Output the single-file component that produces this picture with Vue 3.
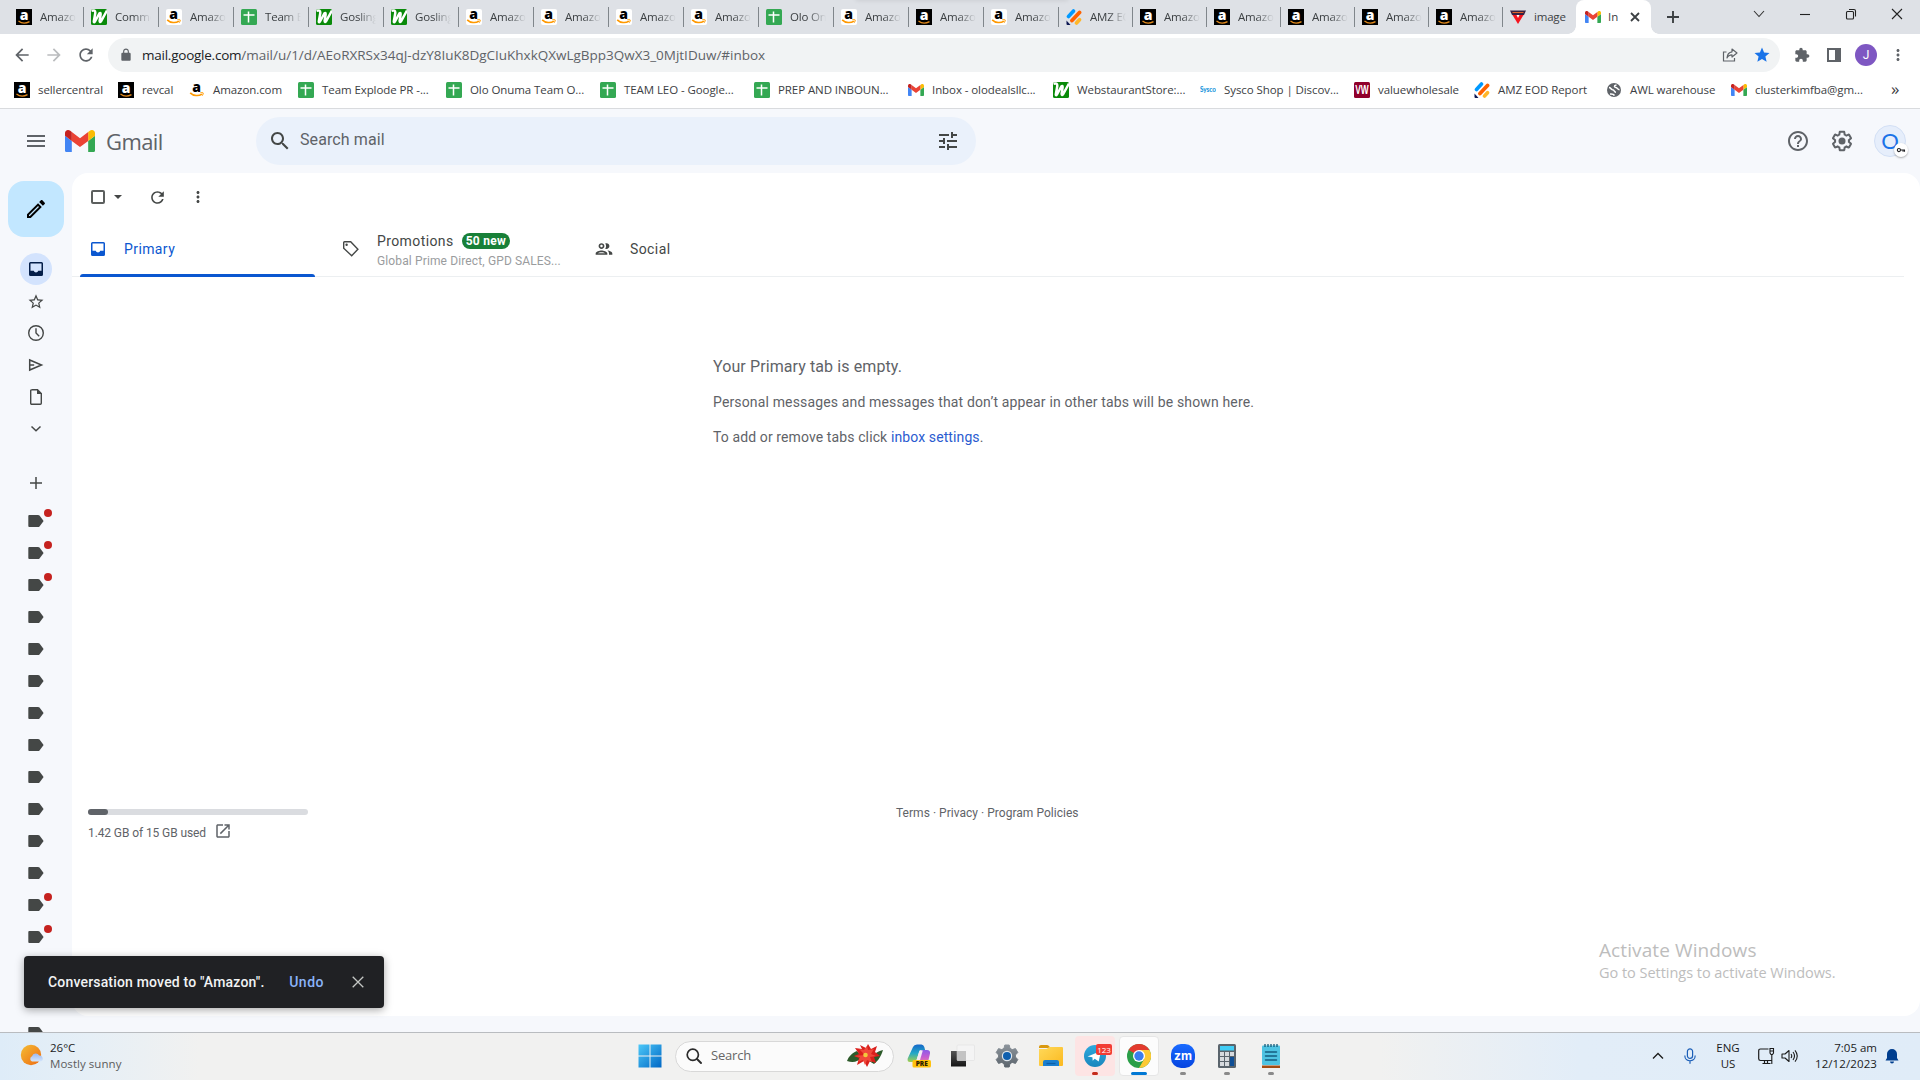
<script setup>
const tabs = [
  { icon: 'amz-dark', title: 'Amazon' },
  { icon: 'webst', title: 'Commer' },
  { icon: 'amz-light', title: 'Amazon' },
  { icon: 'sheet', title: 'Team Ex' },
  { icon: 'webst', title: 'Gosling' },
  { icon: 'webst', title: 'Gosling' },
  { icon: 'amz-light', title: 'Amazon' },
  { icon: 'amz-light', title: 'Amazon' },
  { icon: 'amz-light', title: 'Amazon' },
  { icon: 'amz-light', title: 'Amazon' },
  { icon: 'sheet', title: 'Olo Onu' },
  { icon: 'amz-light', title: 'Amazon' },
  { icon: 'amz-dark', title: 'Amazon' },
  { icon: 'amz-light', title: 'Amazon' },
  { icon: 'jot', title: 'AMZ EO', narrow: true },
  { icon: 'amz-dark', title: 'Amazon', narrow: true },
  { icon: 'amz-dark', title: 'Amazon', narrow: true },
  { icon: 'amz-dark', title: 'Amazon', narrow: true },
  { icon: 'amz-dark', title: 'Amazon', narrow: true },
  { icon: 'amz-dark', title: 'Amazon', narrow: true },
  { icon: 'shield', title: 'image', narrow: true, last: true },
]

// w: label width in px
const bookmarks = [
  { icon: 'amz-dark', label: 'sellercentral', w: 63 },
  { icon: 'amz-dark', label: 'revcal', w: 30 },
  { icon: 'amz-plain', label: 'Amazon.com', w: 68 },
  { icon: 'sheet', label: 'Team Explode PR -...', w: 107 },
  { icon: 'sheet', label: 'Olo Onuma Team O...', w: 113 },
  { icon: 'sheet', label: 'TEAM LEO - Google...', w: 113 },
  { icon: 'sheet', label: 'PREP AND INBOUN...', w: 113 },
  { icon: 'gmail', label: 'Inbox - olodealsllc...', w: 104 },
  { icon: 'webst', label: 'WebstaurantStore:...', w: 106 },
  { icon: 'sysco', label: 'Sysco Shop | Discov...', w: 113 },
  { icon: 'vw', label: 'valuewholesale', w: 79 },
  { icon: 'jot', label: 'AMZ EOD Report', w: 91 },
  { icon: 'globe', label: 'AWL warehouse', w: 84 },
  { icon: 'gmail', label: 'clusterkimfba@gm...', w: 110 },
]

const folders = ['star', 'clock', 'send', 'file', 'expand']
const unread = [0, 1, 2, 12, 13]
const labels = Array.from({ length: 17 }, (_, i) => ({ id: i, dot: unread.includes(i) }))

const apps = [
  { icon: 'settings-app' },
  { icon: 'folder' },
  { icon: 'telegram', state: 'alert' },
  { icon: 'chrome', state: 'active' },
  { icon: 'zoom', state: 'open' },
  { icon: 'calc', state: 'open' },
  { icon: 'notepad', state: 'open' },
]
</script>

<template>
  <svg class="defs" width="0" height="0">
    <defs>
      <linearGradient id="g-win" x1="0" y1="0" x2="1" y2="1">
        <stop offset="0" stop-color="#4cc8f8" /><stop offset="1" stop-color="#0067c5" />
      </linearGradient>
      <linearGradient id="g-sun" x1="0" y1="0" x2="1" y2="1">
        <stop offset="0" stop-color="#f4bd35" /><stop offset="1" stop-color="#ee6a10" />
      </linearGradient>
      <linearGradient id="g-cloud" x1="0" y1="0" x2="0" y2="1">
        <stop offset="0" stop-color="#9db9ef" /><stop offset="1" stop-color="#d4e6fb" />
      </linearGradient>
      <linearGradient id="g-tg" x1="0" y1="0" x2="0" y2="1">
        <stop offset="0" stop-color="#2fa9dd" /><stop offset="1" stop-color="#1b86bd" />
      </linearGradient>
      <linearGradient id="g-fold" x1="0" y1="0" x2="1" y2="1">
        <stop offset="0" stop-color="#ffd95a" /><stop offset="1" stop-color="#fbb91f" />
      </linearGradient>
      <linearGradient id="g-cpa" x1="0" y1="0" x2="0" y2="1">
        <stop offset="0" stop-color="#1668c9" /><stop offset=".5" stop-color="#22a8c8" /><stop offset="1" stop-color="#a5cf4a" />
      </linearGradient>
      <linearGradient id="g-cpb" x1="0" y1="0" x2="0" y2="1">
        <stop offset="0" stop-color="#8b5be8" /><stop offset=".5" stop-color="#c65bd0" /><stop offset="1" stop-color="#f0849a" />
      </linearGradient>
      <linearGradient id="g-zm" x1="0" y1="0" x2="0" y2="1">
        <stop offset="0" stop-color="#1a6bff" /><stop offset="1" stop-color="#0544e0" />
      </linearGradient>
      <linearGradient id="g-gear" x1="0" y1="0" x2="0" y2="1">
        <stop offset="0" stop-color="#8c949b" /><stop offset="1" stop-color="#5c656d" />
      </linearGradient>
      <linearGradient id="g-tv" x1="0" y1="0" x2="0" y2="1">
        <stop offset="0" stop-color="#555" /><stop offset="1" stop-color="#151515" />
      </linearGradient>
    </defs>

    <!-- favicons, 16px grid -->
    <symbol id="amz-dark" viewBox="0 0 16 16">
      <rect width="16" height="16" fill="#000" />
      <text x="8" y="11" text-anchor="middle" font-family="Open Sans" font-weight="800" font-size="14" fill="#fff">a</text>
      <path d="M2.500 12c3 2.400 7.500 2.500 11 .6" fill="none" stroke="#e28a1c" stroke-width="1.300" />
    </symbol>
    <symbol id="amz-light" viewBox="0 0 16 16">
      <rect width="16" height="16" rx="2" fill="#fff" />
      <text x="7.600" y="10" text-anchor="middle" font-family="Open Sans" font-weight="800" font-size="14" fill="#000">a</text>
      <path d="M1.200 10.800c3.300 3.200 8.300 3.500 11.800 1.300" fill="none" stroke="#f90" stroke-width="1.700" />
      <path d="M11.300 10.800c1.600-.5 3-.3 2.900.2 0 .8-.3 1.800-.9 2.700" fill="none" stroke="#f90" stroke-width="1" />
    </symbol>
    <symbol id="amz-plain" viewBox="0 0 16 16">
      <text x="7.600" y="10" text-anchor="middle" font-family="Open Sans" font-weight="800" font-size="14" fill="#000">a</text>
      <path d="M1.200 10.800c3.300 3.200 8.300 3.500 11.800 1.300" fill="none" stroke="#f90" stroke-width="1.700" />
      <path d="M11.300 10.800c1.600-.5 3-.3 2.900.2 0 .8-.3 1.800-.9 2.700" fill="none" stroke="#f90" stroke-width="1" />
    </symbol>
    <symbol id="sheet" viewBox="0 0 16 16">
      <rect width="16" height="16" rx="1.500" fill="#34a853" />
      <path d="M2.500 6h11M7.500 2.500v11" stroke="#fff" stroke-width="1.500" />
    </symbol>
    <symbol id="webst" viewBox="0 0 16 16">
      <rect width="16" height="16" rx="1.500" fill="#0a8a0a" />
      <path d="M.5 1.800Q4.500.5 4.300 4L2.800 12.500Q2.800 14 4 12.500L8.300 4.500Q9.800 3 9.600 5.500L8.600 12Q8.800 14 10 12.300L16 1.500" fill="none" stroke="#fff" stroke-width="2.500" stroke-linejoin="round" />
    </symbol>
    <symbol id="jot" viewBox="0 0 16 16">
      <path d="M2.500 7.500l5-5.500" stroke="#0099ff" stroke-width="3.600" stroke-linecap="round" />
      <path d="M6 11.500L13.500 3.500" stroke="#ff6100" stroke-width="3.800" stroke-linecap="round" />
      <path d="M10.500 14l3-3.300" stroke="#ffb629" stroke-width="3.600" stroke-linecap="round" />
      <path d="M.5 11.500l4 4.500H1.500q-1 0-1-1z" fill="#0a1551" />
    </symbol>
    <symbol id="shield" viewBox="0 0 16 16">
      <path d="M0 1.500h16L14 6H2z" fill="#3a2140" />
      <path d="M2.500 3.500h11" stroke="#e0662c" stroke-width="1" />
      <path d="M2.500 6h11L8 15z" fill="#f5141e" />
      <path d="M6.500 6h3L8 9z" fill="#fff" />
    </symbol>
    <symbol id="gmail" viewBox="52 42 88 66">
      <path fill="#4285f4" d="M58 108h14V74L52 59v43c0 3.320 2.690 6 6 6" />
      <path fill="#34a853" d="M120 108h14c3.320 0 6-2.690 6-6V59l-20 15" />
      <path fill="#fbbc04" d="M120 48v26l20-15v-8c0-7.420-8.470-11.650-14.400-7.200" />
      <path fill="#ea4335" d="M72 74V48l24 18 24-18v26L96 92" />
      <path fill="#c5221f" d="M52 51v8l20 15V48l-5.600-4.200c-5.940-4.450-14.400-.22-14.400 7.200" />
    </symbol>
    <symbol id="sysco" viewBox="0 0 16 16">
      <text x="0" y="10.300" font-family="Lato" font-weight="900" font-size="6.500" textLength="16" lengthAdjust="spacingAndGlyphs" fill="#1a96dc">Sysco</text>
    </symbol>
    <symbol id="vw" viewBox="0 0 16 16">
      <rect width="16" height="16" rx="1.500" fill="#90002b" />
      <text x="8" y="12.300" text-anchor="middle" font-family="Liberation Sans" font-weight="700" font-size="12" textLength="13.500" lengthAdjust="spacingAndGlyphs" fill="#fff">VW</text>
    </symbol>
    <symbol id="globe" viewBox="0 0 16 16">
      <circle cx="8" cy="8" r="7" fill="#5f6368" />
      <path d="M3 5.500c2 0 1.500 2 3.500 2.200 2.500 0 1 2.500 3.500 2.500M10.500 3c-3 .5-2.500 2.500 0 2.700 1.200.3 1 2 3 2M4 12c2 .2 3.500 0 4.500 1.500" fill="none" stroke="#fff" stroke-width="1.500" />
    </symbol>

    <!-- browser glyphs -->
    <symbol id="back" viewBox="0 0 24 24"><path d="M20 11H7.830l5.590-5.590L12 4l-8 8 8 8 1.410-1.410L7.830 13H20v-2z" /></symbol>
    <symbol id="refresh" viewBox="0 0 24 24"><path d="M17.650 6.350C16.200 4.900 14.210 4 12 4c-4.420 0-7.990 3.580-7.990 8s3.570 8 7.990 8c3.730 0 6.840-2.550 7.730-6h-2.080c-.82 2.330-3.040 4-5.650 4-3.310 0-6-2.690-6-6s2.690-6 6-6c1.660 0 3.140.69 4.220 1.780L13 11h7V4l-2.350 2.350z" /></symbol>
    <symbol id="lock" viewBox="0 0 24 24"><path d="M18 8h-1V6c0-2.760-2.240-5-5-5S7 3.240 7 6v2H6c-1.100 0-2 .9-2 2v10c0 1.100.9 2 2 2h12c1.100 0 2-.9 2-2V10c0-1.100-.9-2-2-2zM9 6c0-1.660 1.340-3 3-3s3 1.340 3 3v2H9V6z" /></symbol>
    <symbol id="share" viewBox="0 0 16 16">
      <path d="M4.500 5H1.500v9h11v-3" fill="none" stroke="currentColor" stroke-width="1.200" />
      <path d="M10 2l5 4-5 4V7.800C7.500 7.800 6 8.800 5 11c.2-3.500 2-5.800 5-6.200z" fill="none" stroke="currentColor" stroke-width="1.200" stroke-linejoin="round" />
    </symbol>
    <symbol id="star-fill" viewBox="0 0 24 24"><path d="M12 17.270L18.180 21l-1.640-7.030L22 9.240l-7.190-.61L12 2 9.190 8.630 2 9.240l5.460 4.730L5.820 21z" /></symbol>
    <symbol id="puzzle" viewBox="0 0 24 24"><path d="M20.500 11H19V7c0-1.100-.9-2-2-2h-4V3.500C13 2.120 11.880 1 10.500 1S8 2.120 8 3.500V5H4c-1.100 0-1.990.9-1.990 2v3.800H3.500c1.490 0 2.700 1.210 2.700 2.700s-1.210 2.700-2.700 2.700H2V20c0 1.100.9 2 2 2h3.800v-1.500c0-1.490 1.210-2.700 2.700-2.700 1.490 0 2.700 1.210 2.700 2.700V22H17c1.100 0 2-.9 2-2v-4h1.500c1.380 0 2.500-1.120 2.500-2.500S21.880 11 20.500 11z" /></symbol>
    <symbol id="panel" viewBox="0 0 16 16"><path d="M1 1h14v14H1zM3 3v10h6V3z" fill-rule="evenodd" /></symbol>
    <symbol id="dots" viewBox="0 0 24 24"><path d="M12 8c1.100 0 2-.9 2-2s-.9-2-2-2-2 .9-2 2 .9 2 2 2zm0 2c-1.100 0-2 .9-2 2s.9 2 2 2 2-.9 2-2-.9-2-2-2zm0 6c-1.100 0-2 .9-2 2s.9 2 2 2 2-.9 2-2-.9-2-2-2z" /></symbol>

    <!-- mail glyphs -->
    <symbol id="menu" viewBox="0 0 24 24"><path d="M3 18h18v-2H3v2zm0-5h18v-2H3v2zm0-7v2h18V6H3z" /></symbol>
    <symbol id="search" viewBox="0 0 24 24"><path d="M15.500 14h-.79l-.28-.27C15.410 12.590 16 11.110 16 9.500 16 5.910 13.090 3 9.500 3S3 5.910 3 9.500 5.910 16 9.500 16c1.610 0 3.090-.59 4.230-1.570l.27.28v.79l5 4.990L20.490 19l-4.990-5zm-6 0C7.010 14 5 11.990 5 9.500S7.010 5 9.500 5 14 7.010 14 9.500 11.990 14 9.500 14z" /></symbol>
    <symbol id="tune" viewBox="0 0 24 24"><path d="M3 17v2h6v-2H3zM3 5v2h10V5H3zm10 16v-2h8v-2h-8v-2h-2v6h2zM7 9v2H3v2h4v2h2V9H7zm14 4v-2H11v2h10zm-6-4h2V7h4V5h-4V3h-2v6z" /></symbol>
    <symbol id="help" viewBox="0 0 24 24"><path d="M11 18h2v-2h-2v2zm1-16C6.480 2 2 6.480 2 12s4.480 10 10 10 10-4.480 10-10S17.520 2 12 2zm0 18c-4.410 0-8-3.590-8-8s3.590-8 8-8 8 3.590 8 8-3.590 8-8 8zm0-14c-2.210 0-4 1.790-4 4h2c0-1.100.9-2 2-2s2 .9 2 2c0 2-3 1.750-3 5h2c0-2.250 3-2.500 3-5 0-2.210-1.790-4-4-4z" /></symbol>
    <symbol id="gear" viewBox="0 0 24 24">
      <path d="M13.850 22.250h-3.700c-.74 0-1.360-.54-1.450-1.270l-.27-1.890c-.27-.14-.53-.29-.79-.46l-1.800.72c-.7.26-1.470-.03-1.810-.65L2.200 15.530c-.35-.66-.2-1.440.36-1.880l1.530-1.190c-.01-.15-.02-.3-.02-.46 0-.15.01-.31.02-.46l-1.520-1.190c-.59-.45-.74-1.260-.37-1.880l1.850-3.190c.34-.62 1.110-.9 1.790-.63l1.810.73c.26-.17.52-.32.78-.46l.27-1.910c.09-.7.71-1.250 1.440-1.250h3.700c.74 0 1.360.54 1.450 1.270l.27 1.890c.27.14.53.29.79.46l1.800-.72c.71-.26 1.480.03 1.820.65l1.840 3.180c.36.66.2 1.440-.36 1.880l-1.520 1.190c.01.15.02.3.02.46s-.01.31-.02.46l1.520 1.190c.56.45.72 1.230.37 1.860l-1.860 3.220c-.34.62-1.110.9-1.800.63l-1.800-.72c-.26.17-.52.32-.78.46l-.27 1.910c-.1.68-.72 1.220-1.460 1.220zm-3.230-2h2.760l.37-2.550.53-.22c.44-.18.88-.44 1.340-.78l.45-.34 2.380.96 1.380-2.400-2.030-1.580.07-.56c.03-.26.06-.51.06-.78s-.03-.53-.06-.78l-.07-.56 2.030-1.580-1.390-2.400-2.390.96-.45-.35c-.42-.32-.87-.58-1.330-.77l-.52-.22-.37-2.550h-2.760l-.37 2.550-.53.21c-.44.19-.88.44-1.340.79l-.45.33-2.380-.95-1.390 2.390 2.030 1.580-.07.56a7 7 0 0 0-.06.79c0 .26.02.53.06.78l.07.56-2.030 1.580 1.380 2.400 2.390-.96.45.35c.43.33.86.58 1.330.77l.53.22.38 2.550z" />
      <circle cx="12" cy="12" r="3.500" />
    </symbol>
    <symbol id="key" viewBox="0 0 12 12">
      <circle cx="3.500" cy="6" r="1.900" fill="none" stroke="currentColor" stroke-width="1.300" />
      <path d="M5.300 6h5.500M8.500 6v2M10.200 6v2" stroke="currentColor" stroke-width="1.300" />
    </symbol>
    <symbol id="pencil" viewBox="0 0 24 24"><path d="M14.060 9.020l.92.92L5.920 19H5v-.92l9.060-9.060M17.660 3c-.25 0-.51.1-.7.29l-1.830 1.830 3.750 3.750 1.830-1.830c.39-.39.39-1.020 0-1.410l-2.340-2.340c-.2-.2-.45-.29-.71-.29zm-3.600 3.190L3 17.250V21h3.750L17.810 9.940l-3.750-3.750z" /></symbol>
    <symbol id="inbox" viewBox="0 0 20 20"><path d="M4.500 3h11A1.500 1.500 0 0 1 17 4.500v11a1.500 1.500 0 0 1-1.500 1.500h-11A1.500 1.500 0 0 1 3 15.500v-11A1.500 1.500 0 0 1 4.500 3zM4.500 4.500v7.300h3.300c.3 1.100 1.200 1.700 2.200 1.700s1.900-.6 2.200-1.700h3.300V4.500z" fill-rule="evenodd" /></symbol>
    <symbol id="star" viewBox="0 0 24 24"><path d="M22 9.240l-7.190-.62L12 2 9.190 8.630 2 9.240l5.460 4.730L5.820 21 12 17.270 18.180 21l-1.630-7.030L22 9.240zM12 15.400l-3.760 2.270 1-4.280-3.320-2.880 4.380-.38L12 6.100l1.710 4.040 4.380.38-3.320 2.880 1 4.280L12 15.400z" transform="translate(1.200 2.200) scale(.9)" /></symbol>
    <symbol id="clock" viewBox="0 0 20 20"><path d="M10 5.300V10l3.200 3.200" fill="none" stroke="currentColor" stroke-width="1.400" /><circle cx="10" cy="10" r="7.300" fill="none" stroke="currentColor" stroke-width="1.400" /></symbol>
    <symbol id="send" viewBox="0 0 20 20"><path d="M3.700 5v10L15.500 10zM3.700 10h4.500" fill="none" stroke="currentColor" stroke-width="1.500" /></symbol>
    <symbol id="file" viewBox="0 0 20 20"><path d="M5.500 2.700h6l3.800 3.800v9.800a1 1 0 0 1-1 1H5.700a1 1 0 0 1-1-1V3.700a1 1 0 0 1 1-1z" fill="none" stroke="currentColor" stroke-width="1.400" /><path d="M11 2v5h5z" /></symbol>
    <symbol id="expand" viewBox="0 0 20 20"><path d="M5.500 7.500l4.500 4.300 4.500-4.300" fill="none" stroke="currentColor" stroke-width="1.500" /></symbol>
    <symbol id="plus" viewBox="0 0 20 20"><path d="M10 4v12M4 10h12" fill="none" stroke="currentColor" stroke-width="1.500" /></symbol>
    <symbol id="label" viewBox="0 0 20 20"><path d="M3.300 4h8.700q1 0 1.500.6L17.600 10l-4.100 5.400q-.5.6-1.500.6H3.300Q2.300 16 2.300 15V5q0-1 1-1z" /></symbol>
    <symbol id="tag" viewBox="0 0 20 20">
      <path d="M3.500 2.700h6.200l7.200 7.500-6.200 6.500-8-7.500V3.500q0-.8.8-.8z" fill="none" stroke="currentColor" stroke-width="1.400" />
      <circle cx="5.600" cy="5.700" r="1.200" />
    </symbol>
    <symbol id="people" viewBox="0 0 24 24"><path d="M9 13.750c-2.340 0-7 1.170-7 3.500V19h14v-1.750c0-2.330-4.660-3.500-7-3.500zM4.340 17c.84-.58 2.870-1.250 4.660-1.250s3.820.67 4.660 1.250H4.340zM9 12c1.930 0 3.500-1.570 3.500-3.500S10.930 5 9 5 5.500 6.570 5.500 8.500 7.070 12 9 12zm0-5c.83 0 1.500.67 1.500 1.500S9.830 10 9 10s-1.500-.67-1.500-1.500S8.170 7 9 7zm7.040 6.810c1.160.84 1.960 1.960 1.960 3.440V19h4v-1.750c0-2.020-3.500-3.170-5.960-3.440zM15 12c1.930 0 3.500-1.570 3.500-3.500S16.930 5 15 5c-.54 0-1.040.13-1.500.35.63.89 1 1.980 1 3.150s-.37 2.260-1 3.150c.46.22.96.35 1.500.35z" /></symbol>
    <symbol id="launch" viewBox="0 0 24 24"><path d="M19 19H5V5h7V3H5c-1.110 0-2 .9-2 2v14c0 1.100.89 2 2 2h14c1.100 0 2-.9 2-2v-7h-2v7zM14 3v2h3.590l-9.830 9.830 1.410 1.410L19 6.410V10h2V3h-7z" /></symbol>
    <symbol id="close" viewBox="0 0 12 12"><path d="M.7.7l10.600 10.600M11.300.7L.7 11.300" fill="none" stroke="currentColor" stroke-width="1.300" /></symbol>

    <!-- taskbar apps, 24px grid -->
    <symbol id="weather" viewBox="0 0 24 24">
      <circle cx="11" cy="11" r="10.200" fill="url(#g-sun)" />
      <path d="M12 17.500a2.800 2.800 0 0 1 0-5.200 4 4 0 0 1 7.200-.8 3 3 0 0 1 1 6z" fill="url(#g-cloud)" />
    </symbol>
    <symbol id="win" viewBox="0 0 24 24"><path d="M.5.5h11v11H.5zM12.500.5h11v11h-11zM.5 12.500h11v11H.5zM12.500 12.500h11v11h-11z" fill="url(#g-win)" /></symbol>
    <symbol id="flower" viewBox="0 0 36 24">
      <path d="M0 17c2-5 5-8 10-10l5 6c-4 5-9 6-15 4zM36 6c-2 6-4 10-9 14l-5-3c2-5 7-9 14-11z" fill="#2c5a2a" />
      <path d="M18 11L13 1l6 3 2-4 3 5 6-3-2 6 5 4-6 1 2 6-6-2-3 6-3-6-7 4 2-7-5-2 5-2-4-6 7 1z" fill="#d91f1c" />
      <path d="M18 11l-6-6 5 1 3-4 1 4 6-1-3 5 5 2-6 1 2 5-5-2-2 5-2-5-5 2 2-5-6-1z" fill="#f0483a" />
      <circle cx="18.500" cy="11" r="2.300" fill="#f3c93c" />
    </symbol>
    <symbol id="copilot" viewBox="0 0 24 24">
      <path d="M6 3q1-2.500 4-2.500h4.500q2 0 2.800 2.500l.8 3h-3.500q-2 0-2.600 2l-2 7q-1 3-4 3H3Q0 18 .7 14.500z" fill="url(#g-cpa)" />
      <path d="M14.500 6H20q3.500 0 3 3.500L21.500 16q-.8 4-4.500 4H8.500q2 0 3-3.500z" fill="url(#g-cpb)" />
      <path d="M12.600 6.500h3.200L13 16H9.500z" fill="#f5e9f5" />
      <rect x="5.500" y="16" width="18.500" height="7.500" rx="1.500" fill="#ffc20e" />
      <text x="14.700" y="22" text-anchor="middle" font-family="Open Sans" font-weight="800" font-size="6.500" fill="#2a2000">PRE</text>
    </symbol>
    <symbol id="taskview" viewBox="0 0 24 24">
      <rect x="0" y="7" width="15" height="15.500" fill="url(#g-tv)" />
      <rect x="6" y="1" width="17.500" height="15.500" rx="1" fill="#f4f4f4" stroke="#dcdcdc" stroke-width=".5" />
      <rect x="6" y="7" width="9" height="9.500" fill="#c3c3c3" />
    </symbol>
    <symbol id="settings-app" viewBox="0 0 24 24">
      <path d="M9.800 1h4.400l.8 3.300 2.200 1.300 3.300-1L22.800 8.500 20.400 11v2l2.400 2.500-2.300 3.900-3.300-1-2.200 1.300-.8 3.300H9.800L9 19.700l-2.200-1.300-3.300 1-2.300-3.900L3.600 13v-2L1.200 8.500l2.300-3.900 3.300 1L9 4.300z" fill="url(#g-gear)" stroke="url(#g-gear)" stroke-linejoin="round" />
      <circle cx="12" cy="12" r="5.200" fill="#dfe6ec" />
      <circle cx="12" cy="12" r="4" fill="#0f5fae" />
    </symbol>
    <symbol id="folder" viewBox="0 0 24 24">
      <path d="M0 3Q0 1 2 1h6q1 0 2 1l1.500 2H0z" fill="#d9980f" />
      <path d="M0 5h7q1 0 2-1l1-1h13q1 0 1 1v17q0 1-1 1H1q-1 0-1-1z" fill="url(#g-fold)" />
      <path d="M4 22v-4q0-2 2-2h12q2 0 2 2v4z" fill="#1b7fce" />
      <path d="M7.500 19.500h9" stroke="#0d5fa8" stroke-width="1.300" />
    </symbol>
    <symbol id="telegram" viewBox="0 0 24 24">
      <circle cx="12" cy="12" r="11" fill="url(#g-tg)" />
      <path d="M4.500 12.500L18 7l-2.300 10.500-4-2.800-2 2-.3-3.500z" fill="#fff" />
    </symbol>
    <symbol id="chrome" viewBox="0 0 24 24">
      <circle cx="12" cy="12" r="12" fill="#2a9f48" />
      <path d="M12 12L1.600 6A12 12 0 0 1 22.400 6z" fill="#e33b2e" />
      <path d="M22.400 6A12 12 0 0 1 12 24l5.200-9L12 6z" fill="#fcc934" />
      <circle cx="12" cy="12" r="6" fill="#fff" />
      <circle cx="12" cy="12" r="4.700" fill="#3b7ded" />
    </symbol>
    <symbol id="zoom" viewBox="0 0 24 24">
      <rect width="24" height="24" rx="10" fill="url(#g-zm)" />
      <text x="12" y="16" text-anchor="middle" font-family="Inter" font-weight="700" font-size="12" textLength="18" lengthAdjust="spacingAndGlyphs" fill="#fff">zm</text>
    </symbol>
    <symbol id="calc" viewBox="0 0 24 24">
      <rect x="3" width="18" height="24" rx="1.500" fill="#5a646c" />
      <rect x="5" y="2" width="14" height="4.500" fill="#41cdf5" />
      <path d="M5 8h4v4H5zM10 8h4v4h-4zM15 8h4v4h-4zM5 13h4v4H5zM10 13h4v4h-4zM5 18h4v4H5zM10 18h4v4h-4z" fill="#d6dade" />
      <path d="M15 13h4v9h-4z" fill="#0f4f96" />
    </symbol>
    <symbol id="notepad" viewBox="0 0 24 24">
      <path d="M3 20h18v4H3z" fill="#a34d14" /><path d="M3 20h18v1.500H3z" fill="#e8e8e8" />
      <rect x="3" y="1.500" width="18" height="19.500" rx="1" fill="#4ec3e2" />
      <path d="M6 0v3M9 0v3M12 0v3M15 0v3M18 0v3" stroke="#145a78" stroke-width="1.300" />
      <path d="M6.500 8h11M6.500 12h11M6.500 16h11" stroke="#155d80" stroke-width="1.500" stroke-linecap="round" />
    </symbol>
    <symbol id="mic" viewBox="0 0 16 16"><path d="M8 .8a2.600 2.600 0 0 1 2.600 2.600v4.400a2.600 2.600 0 0 1-5.200 0V3.400A2.600 2.600 0 0 1 8 .8zM2.800 7.500c0 7 10.400 7 10.400 0M8 12.800v3" fill="none" stroke="#1c5fb8" stroke-width="1.200" /></symbol>
    <symbol id="monitor" viewBox="0 0 18 18"><path d="M11.500 2H3.500Q1.700 2 1.700 3.800v8Q1.700 13.500 3.500 13.500H15M5.500 16.500h8M7.500 13.500v3M10.500 13.500v3" fill="none" stroke="currentColor" stroke-width="1.200" /><path d="M13 1.500h3.500V6L15.500 7.500h-1.500L13 6zM13 4h3.500M14.800 7.500V17" fill="none" stroke="currentColor" stroke-width="1.100" /></symbol>
    <symbol id="speaker" viewBox="0 0 18 16"><path d="M1 6h3l4-3.500v11L4 10H1zM10 6q1.500 2 0 4M12 4q3 4 0 8M14 2.300q4.500 5.700 0 11.400" fill="none" stroke="currentColor" stroke-width="1.100" stroke-linejoin="round" /></symbol>
    <symbol id="bell" viewBox="0 0 16 16"><path d="M8 1a5 5 0 0 1 5 5v4l1.500 2.500H1.500L3 10V6a5 5 0 0 1 5-5zM6 13.500h4a2 2 0 0 1-4 0z" fill="#003e8f" /></symbol>
  </svg>

  <div class="screen">
    <div class="tabstrip">
      <div v-for="(t, i) in tabs" :key="i" class="tab" :class="{ narrow: t.narrow, last: t.last }">
        <svg class="fav"><use :href="`#${t.icon}`" /></svg>
        <span class="tab-title">{{ t.title }}</span>
      </div>
      <div class="tab-active">
        <svg class="fav"><use href="#gmail" /></svg>
        <span>In</span>
        <svg class="tab-x" viewBox="0 0 12 12"><path d="M2 2l8 8M10 2l-8 8" stroke="#3c4043" stroke-width="1.800" /></svg>
      </div>
      <svg class="newtab" viewBox="0 0 14 14"><path d="M7 1v12M1 7h12" stroke="#3c4043" stroke-width="1.900" /></svg>
      <div class="winbtns">
        <svg viewBox="0 0 12 12"><path d="M1 3l5 5.500L11 3" fill="none" stroke="#333" stroke-width="1.100" /></svg>
        <svg viewBox="0 0 12 12"><path d="M1 6.500h10" stroke="#222" stroke-width="1.100" /></svg>
        <svg viewBox="0 0 12 12"><path d="M1.500 4.500q0-1 1-1H7.500q1 0 1 1v5.500q0 1-1 1H2.500q-1 0-1-1zM4 1.500H9q1.500 0 1.500 1.500V8.500" fill="none" stroke="#222" stroke-width="1.100" /></svg>
        <svg viewBox="0 0 12 12"><path d="M1 1l10 10M11 1L1 11" stroke="#222" stroke-width="1.100" /></svg>
      </div>
      <div class="drop-shade" />
    </div>

    <div class="navbar">
      <svg class="nav-ic"><use href="#back" /></svg>
      <svg class="nav-ic fwd"><use href="#back" /></svg>
      <svg class="nav-ic"><use href="#refresh" /></svg>
      <div class="omnibox">
        <svg class="lock"><use href="#lock" /></svg>
        <span class="url"><b>mail.google.com</b>/mail/u/1/d/AEoRXRSx34qJ-dzY8IuK8DgCIuKhxkQXwLgBpp3QwX3_0MjtIDuw/#inbox</span>
        <svg class="share"><use href="#share" /></svg>
        <svg class="bm-star"><use href="#star-fill" /></svg>
      </div>
      <svg class="ext"><use href="#puzzle" /></svg>
      <svg class="side"><use href="#panel" /></svg>
      <div class="profile">J</div>
      <svg class="more"><use href="#dots" /></svg>
    </div>

    <div class="bookmarks">
      <div v-for="b in bookmarks" :key="b.label" class="bm">
        <svg class="fav"><use :href="`#${b.icon}`" /></svg>
        <span :style="{ width: b.w + 'px' }">{{ b.label }}</span>
      </div>
      <div class="bm-more">»</div>
    </div>

    <div class="mail">
      <header class="topbar">
        <svg class="burger"><use href="#menu" /></svg>
        <svg class="glogo"><use href="#gmail" /></svg>
        <span class="brand">Gmail</span>
        <div class="searchbox">
          <svg class="i24"><use href="#search" /></svg>
          <span>Search mail</span>
          <svg class="i24"><use href="#tune" /></svg>
        </div>
        <div class="topbar-right">
          <svg class="i24"><use href="#help" /></svg>
          <svg class="i24"><use href="#gear" /></svg>
          <div class="account">
            O
            <div class="badge-key"><svg><use href="#key" /></svg></div>
          </div>
        </div>
      </header>

      <div class="body">
        <nav class="rail">
          <div class="compose"><svg class="i24"><use href="#pencil" /></svg></div>
          <div class="rail-item sel"><svg class="i20"><use href="#inbox" /></svg></div>
          <div v-for="f in folders" :key="f" class="rail-item"><svg class="i20"><use :href="`#${f}`" /></svg></div>
          <div class="rail-item add"><svg class="i20"><use href="#plus" /></svg></div>
          <div v-for="l in labels" :key="l.id" class="rail-item">
            <svg class="i20"><use href="#label" /></svg>
            <i v-if="l.dot" class="dot" />
          </div>
        </nav>

        <main class="panel">
          <div class="tools">
            <span class="check" />
            <span class="caret" />
            <svg class="tool-refresh"><use href="#refresh" /></svg>
            <svg class="tool-dots"><use href="#dots" /></svg>
          </div>
          <div class="cats">
            <div class="cat on">
              <svg class="i20"><use href="#inbox" /></svg>
              <span class="cat-name">Primary</span>
            </div>
            <div class="cat">
              <svg class="i20"><use href="#tag" /></svg>
              <div class="cat-text">
                <div class="cat-row"><span class="cat-name">Promotions</span><span class="new">50 new</span></div>
                <div class="cat-sub">Global Prime Direct, GPD SALES...</div>
              </div>
            </div>
            <div class="cat">
              <svg class="i20"><use href="#people" /></svg>
              <span class="cat-name">Social</span>
            </div>
          </div>

          <div class="empty">
            <p class="big">Your Primary tab is empty.</p>
            <p>Personal messages and messages that don’t appear in other tabs will be shown here.</p>
            <p class="hint">To add or remove tabs click <a>inbox settings</a>.</p>
          </div>

          <div class="foot">
            <div class="quota">
              <div class="bar"><div class="fill" /></div>
              <div class="used"><span>1.42 GB of 15 GB used</span><svg><use href="#launch" /></svg></div>
            </div>
            <div class="terms">Terms · Privacy · Program Policies</div>
          </div>
        </main>
      </div>

      <div class="toast">
        <span class="msg">Conversation moved to "Amazon".</span>
        <span class="undo">Undo</span>
        <svg><use href="#close" /></svg>
      </div>
      <div class="activate">
        <div class="a1">Activate Windows</div>
        <div class="a2">Go to Settings to activate Windows.</div>
      </div>
    </div>

    <footer class="taskbar">
      <div class="weather">
        <svg><use href="#weather" /></svg>
        <div><div class="deg">26°C</div><div class="cond">Mostly sunny</div></div>
      </div>
      <svg class="start"><use href="#win" /></svg>
      <div class="tsearch">
        <svg class="ts-ic" viewBox="0 0 16 16"><circle cx="6.800" cy="6.800" r="5.600" fill="none" stroke="#2b2b2b" stroke-width="1.700" /><path d="M11 11l4 4" stroke="#2b2b2b" stroke-width="1.900" stroke-linecap="round" /></svg>
        <span>Search</span>
        <svg class="flower"><use href="#flower" /></svg>
      </div>
      <div class="app"><svg><use href="#copilot" /></svg></div>
      <div class="app"><svg><use href="#taskview" /></svg></div>
      <div v-for="a in apps" :key="a.icon" class="app" :class="a.state">
        <svg><use :href="`#${a.icon}`" /></svg>
        <b v-if="a.state === 'alert'" class="count">123</b>
      </div>
      <div class="tray">
        <svg class="t-up" viewBox="0 0 12 12"><path d="M1 8.500l5-5 5 5" fill="none" stroke="#1b1b1b" stroke-width="1.300" /></svg>
        <svg class="t-mic"><use href="#mic" /></svg>
        <div class="lang">ENG<br>US</div>
        <svg class="t-mon"><use href="#monitor" /></svg>
        <svg class="t-spk"><use href="#speaker" /></svg>
        <div class="time"><div>7:05 am</div><div class="date">12/12/2023</div></div>
        <svg class="t-bell"><use href="#bell" /></svg>
      </div>
    </footer>
  </div>
</template>

<style>
body {
  margin: 0;
  overflow: hidden;
}
</style>

<style scoped>
.defs {
  position: absolute;
}
.screen {
  width: 1920px;
  height: 1080px;
  display: flex;
  flex-direction: column;
  overflow: hidden;
  font-family: "Open Sans", "Noto Sans", sans-serif;
  font-size: 11.5px;
  color: #3c4043;
  background: #fff;
}
svg {
  flex: none;
  display: block;
  fill: currentColor;
}
.i24 {
  width: 24px;
  height: 24px;
}
.i20 {
  width: 20px;
  height: 20px;
}
.fav {
  width: 16px;
  height: 16px;
}

/* tab strip */
.tabstrip {
  position: relative;
  height: 34px;
  display: flex;
  align-items: center;
  padding-left: 9px;
  background: #dee1e6;
  box-sizing: border-box;
}
.drop-shade {
  position: absolute;
  left: 856px;
  top: -6px;
  width: 212px;
  height: 5px;
  box-shadow: 0 1px 5px rgba(0, 0, 0, 0.12);
}
.tab {
  width: 75px;
  height: 20px;
  box-sizing: border-box;
  padding-left: 7px;
  display: flex;
  align-items: center;
  gap: 8px;
  border-right: 1px solid #80868b;
}
.tab.narrow {
  width: 74px;
}
.tab.last {
  width: 73px;
  border-right: none;
}
.tab-title {
  width: 36px;
  overflow: hidden;
  white-space: nowrap;
  font-size: 11.5px;
  letter-spacing: -0.2px;
  line-height: 16px;
  margin-top: -1px;
  mask-image: linear-gradient(90deg, #000 50%, transparent 100%);
}
.tab.last .tab-title {
  mask-image: none;
}
.tab-active {
  position: relative;
  width: 75px;
  height: 34px;
  box-sizing: border-box;
  padding-left: 9px;
  display: flex;
  align-items: center;
  background: #fff;
  border-radius: 8px 8px 0 0;
}
.tab-active::before,
.tab-active::after {
  content: "";
  position: absolute;
  bottom: 0;
  width: 8px;
  height: 8px;
}
.tab-active::before {
  left: -8px;
  background: radial-gradient(circle at 0 0, transparent 7.5px, #fff 8px);
}
.tab-active::after {
  right: -8px;
  background: radial-gradient(circle at 100% 0, transparent 7.5px, #fff 8px);
}
.tab-active span {
  margin: -1px 0 0 7px;
  width: 21px;
}
.tab-x {
  width: 12px;
  height: 12px;
}
.newtab {
  width: 14px;
  height: 14px;
  margin-left: 15px;
}
.winbtns {
  display: flex;
  gap: 34px;
  margin: -6px 17px 0 auto;
}
.winbtns svg {
  width: 12px;
  height: 12px;
}

/* navigation bar */
.navbar {
  height: 42px;
  box-sizing: border-box;
  padding: 4px 0;
  display: flex;
  align-items: center;
  color: #5f6368;
}
.nav-ic {
  width: 20px;
  height: 20px;
  margin-left: 12px;
}
.nav-ic.fwd {
  transform: scaleX(-1);
  color: #babcbe;
}
.omnibox {
  width: 1672px;
  height: 34px;
  margin-left: 12px;
  box-sizing: border-box;
  padding: 0 9px 0 11px;
  display: flex;
  align-items: center;
  background: #f1f3f4;
  border-radius: 17px;
}
.lock {
  width: 14px;
  height: 14px;
}
.url {
  margin-left: 9px;
  flex: 1;
  font-size: 13.5px;
  letter-spacing: -0.01px;
  white-space: nowrap;
}
.url b {
  font-weight: 400;
  letter-spacing: -0.24px;
  color: #202124;
}
.share {
  width: 16px;
  height: 16px;
}
.bm-star {
  width: 18px;
  height: 18px;
  margin-left: 15px;
  color: #1a73e8;
}
.ext {
  width: 16px;
  height: 16px;
  margin-left: 14px;
}
.side {
  width: 16px;
  height: 16px;
  margin-left: 16px;
}
.profile {
  width: 22px;
  height: 22px;
  margin-left: 13px;
  border-radius: 50%;
  background: #7e57c2;
  color: #fff;
  font: 12px/22px Roboto, sans-serif;
  text-align: center;
}
.more {
  width: 18px;
  height: 18px;
  margin-left: 12px;
}

/* bookmarks */
.bookmarks {
  height: 33px;
  box-sizing: border-box;
  padding: 0 0 5px 14px;
  display: flex;
  align-items: center;
  border-bottom: 1px solid #d9dbde;
}
.bm {
  display: flex;
  align-items: center;
  gap: 8px;
  margin-right: 17px;
}
.bm span {
  white-space: nowrap;
  letter-spacing: -0.08px;
}
.bm-more {
  margin: -2px 0 0 9px;
  font-size: 17px;
  line-height: 12px;
}

/* mail */
.mail {
  position: relative;
  height: 923px;
  display: flex;
  flex-direction: column;
  overflow: hidden;
  background: #f6f8fc;
  font-family: Roboto, sans-serif;
  color: #444746;
}
.topbar {
  height: 64px;
  flex: none;
  display: flex;
  align-items: center;
  color: #5f6368;
}
.burger {
  width: 24px;
  height: 24px;
  margin-left: 24px;
}
.glogo {
  width: 30px;
  height: 22.5px;
  margin-left: 17px;
}
.brand {
  width: 150px;
  margin-left: 11px;
  font: 400 22px/30px "Open Sans", sans-serif;
  letter-spacing: -0.6px;
  color: #5f6368;
}
.searchbox {
  width: 720px;
  height: 48px;
  box-sizing: border-box;
  padding: 0 16px 0 12px;
  display: flex;
  align-items: center;
  gap: 8px;
  border-radius: 24px;
  background: #eaf1fb;
  color: #444746;
}
.searchbox span {
  margin-top: -3px;
  flex: 1;
  font-size: 16px;
  letter-spacing: 0.1px;
  color: #5f6368;
}
.topbar-right {
  margin-left: auto;
  margin-right: 14px;
  display: flex;
  align-items: center;
  gap: 20px;
}
.account {
  position: relative;
  width: 30px;
  height: 30px;
  border: 1px solid #d3e0f5;
  border-radius: 50%;
  background: #e6eefb;
  color: #1a73e8;
  font: 22px/30px Lato, sans-serif;
  text-align: center;
}
.badge-key {
  position: absolute;
  right: -3px;
  bottom: -1px;
  width: 14px;
  height: 14px;
  border-radius: 50%;
  background: #fff;
  box-shadow: 0 1px 2px rgba(0, 0, 0, 0.3);
  display: flex;
  align-items: center;
  justify-content: center;
  color: #202124;
}
.badge-key svg {
  width: 10px;
  height: 10px;
}
.body {
  height: 859px;
  display: flex;
}
.rail {
  width: 72px;
  display: flex;
  flex-direction: column;
  align-items: center;
}
.compose {
  flex: none;
  width: 56px;
  height: 56px;
  margin: 8px 0 16px;
  border-radius: 16px;
  background: #c2e7ff;
  color: #000;
  display: flex;
  align-items: center;
  justify-content: center;
}
.rail-item {
  position: relative;
  flex: none;
  width: 32px;
  height: 32px;
  display: flex;
  align-items: center;
  justify-content: center;
}
.rail-item.sel {
  border-radius: 50%;
  background: #d3e3fd;
  color: #041e49;
}
.rail-item.add {
  margin: 22px 0 6px;
}
.dot {
  position: absolute;
  left: 24px;
  top: 4px;
  width: 8px;
  height: 8px;
  border-radius: 50%;
  background: #c5221f;
}
.panel {
  width: 1848px;
  height: 843px;
  border-radius: 16px;
  background: #fff;
}
.tools {
  height: 48px;
  display: flex;
  align-items: center;
  padding-left: 19px;
}
.check {
  width: 10px;
  height: 10px;
  border: 2px solid #5c5f5e;
  border-radius: 2px;
}
.caret {
  margin-left: 9px;
  border: 4px solid transparent;
  border-top-color: #444746;
  border-bottom: 0;
}
.tool-refresh {
  width: 19px;
  height: 19px;
  margin-left: 26px;
}
.tool-dots {
  width: 18px;
  height: 18px;
  margin-left: 22px;
}
.cats {
  height: 56px;
  margin-right: 16px;
  box-sizing: border-box;
  padding-left: 8px;
  display: flex;
  gap: 18px;
  border-bottom: 1px solid #eceff1;
}
.cat {
  position: relative;
  width: 235px;
  height: 56px;
  box-sizing: border-box;
  padding-left: 8px;
  display: flex;
  align-items: center;
  gap: 16px;
}
.cat.on {
  color: #0b57d0;
}
.cat.on::after {
  content: "";
  position: absolute;
  left: 0;
  right: 0;
  bottom: 0;
  height: 3px;
  border-radius: 3px 3px 0 0;
  background: #0b57d0;
}
.cat-name {
  font-size: 14px;
  letter-spacing: 0.4px;
}
.cat-text {
  padding-top: 4px;
}
.cat-row {
  display: flex;
  align-items: center;
  gap: 8px;
  height: 16px;
}
.new {
  height: 16px;
  padding: 0 4px;
  border-radius: 8px;
  background: #188038;
  color: #fff;
  font-size: 12px;
  font-weight: 700;
  line-height: 16px;
  letter-spacing: 0.3px;
}
.cat-sub {
  margin-top: 4px;
  height: 16px;
  font-size: 12px;
  line-height: 16px;
  letter-spacing: 0.13px;
  color: #9a9c9e;
}
.empty {
  margin-top: 80px;
  padding-left: 641px;
  color: #5f6368;
}
.empty p {
  margin: 0 0 15px;
  font-size: 14px;
  line-height: 20px;
  letter-spacing: 0.15px;
}
.empty .big {
  font-size: 16px;
  letter-spacing: 0.1px;
}
.empty .hint {
  letter-spacing: 0.11px;
}
.empty a {
  color: #2a5bd0;
}
.foot {
  margin-top: 358px;
  padding-left: 16px;
  display: flex;
}
.quota {
  width: 220px;
  padding-top: 4px;
  color: #5f6368;
}
.bar {
  height: 6px;
  border-radius: 3px;
  background: #dadce0;
}
.fill {
  width: 20px;
  height: 6px;
  border-radius: 3px;
  background: #5f6368;
}
.used {
  margin-top: 8px;
  display: flex;
  align-items: center;
  gap: 8px;
  font-size: 12px;
  line-height: 20px;
}
.used span {
  width: 118px;
  letter-spacing: -0.1px;
  white-space: nowrap;
}
.used svg {
  width: 18px;
  height: 18px;
  margin-top: -4px;
}
.terms {
  margin-left: 588px;
  font-size: 12px;
  line-height: 16px;
  letter-spacing: 0.03px;
  color: #5f6368;
}
.toast {
  position: absolute;
  left: 24px;
  top: 847px;
  width: 360px;
  height: 52px;
  box-sizing: border-box;
  padding: 0 20px 0 24px;
  display: flex;
  align-items: center;
  border-radius: 4px;
  background: #202124;
  box-shadow: 0 2px 8px rgba(0, 0, 0, 0.35);
  font-size: 14px;
  font-weight: 500;
  letter-spacing: 0.18px;
  color: #f1f3f4;
}
.toast .undo {
  margin-left: auto;
  margin-right: 28px;
  letter-spacing: 0.5px;
  color: #8ab4f8;
}
.toast svg {
  width: 12px;
  height: 12px;
  color: #c4c7c5;
}
.activate {
  position: absolute;
  left: 1599px;
  top: 828px;
  font-family: "Open Sans", sans-serif;
  color: #bdbdbd;
  white-space: nowrap;
}
.a1 {
  font-size: 19px;
  line-height: 26px;
  letter-spacing: 0.1px;
}
.a2 {
  font-size: 14.5px;
  line-height: 20px;
  letter-spacing: -0.03px;
}

/* taskbar */
.taskbar {
  height: 48px;
  box-sizing: border-box;
  padding-bottom: 1px;
  border-top: 1px solid #b9bcc0;
  display: flex;
  align-items: center;
  background: linear-gradient(90deg, #deecf8 0, #e6eff6 90px, #f1f1f0 200px, #f1f1f0 1380px, #e2edf8 1580px, #e0ecf8 1920px);
  color: #1b1b1b;
}
.weather {
  width: 618px;
  padding-left: 20px;
  display: flex;
  align-items: center;
  gap: 6px;
  line-height: 16px;
  font-size: 11.5px;
}
.weather svg {
  width: 24px;
  height: 24px;
}
.cond {
  letter-spacing: 0.05px;
  color: #5c5c5c;
}
.start {
  width: 24px;
  height: 24px;
}
.tsearch {
  width: 219px;
  height: 31px;
  margin-left: 13px;
  margin-right: 3px;
  box-sizing: border-box;
  padding: 0 10px 0 10px;
  display: flex;
  align-items: center;
  border: 1px solid #d8d8d8;
  border-radius: 16px;
  background: #fbfbfb;
  color: #666;
}
.ts-ic {
  width: 16px;
  height: 16px;
}
.tsearch span {
  flex: 1;
  margin: -2px 0 0 9px;
  font-size: 13px;
  letter-spacing: -0.2px;
}
.flower {
  width: 36px;
  height: 24px;
}
.app {
  position: relative;
  width: 38px;
  height: 38px;
  margin: 0 2px;
  border: 1px solid transparent;
  border-radius: 4px;
  display: flex;
  align-items: center;
  justify-content: center;
}
.app svg {
  width: 24px;
  height: 24px;
}
.app.alert {
  background: #fde4e4;
}
.app.active {
  background: #fcfcfc;
  border-color: #e6e6e6;
}
.app.open::after,
.app.alert::after,
.app.active::after {
  content: "";
  position: absolute;
  left: 16px;
  bottom: 0;
  width: 6px;
  height: 3px;
  border-radius: 2px;
  background: #8a8a8a;
}
.app.alert::after {
  background: #c42b1c;
}
.app.active::after {
  left: 11px;
  width: 16px;
  background: #0078d4;
}
.count {
  position: absolute;
  left: 20px;
  top: 7px;
  width: 16px;
  height: 11px;
  border-radius: 2px;
  background: #f23c34;
  color: #fff;
  font: 8px/11px "Open Sans", sans-serif;
  text-align: center;
}
.tray {
  margin-left: auto;
  margin-right: 20px;
  display: flex;
  align-items: center;
  font-size: 11.5px;
  line-height: 16px;
}
.t-up {
  width: 12px;
  height: 12px;
}
.t-mic {
  width: 16px;
  height: 16px;
  margin-left: 18px;
}
.lang {
  width: 40px;
  margin-left: 10px;
  text-align: center;
}
.t-mon {
  width: 18px;
  height: 18px;
  margin-left: 9px;
}
.t-spk {
  width: 18px;
  height: 16px;
  margin-left: 6px;
}
.time {
  width: 70px;
  margin-left: 8px;
  text-align: right;
}
.date {
  letter-spacing: 0.1px;
}
.t-bell {
  width: 16px;
  height: 16px;
  margin-left: 7px;
}
</style>
